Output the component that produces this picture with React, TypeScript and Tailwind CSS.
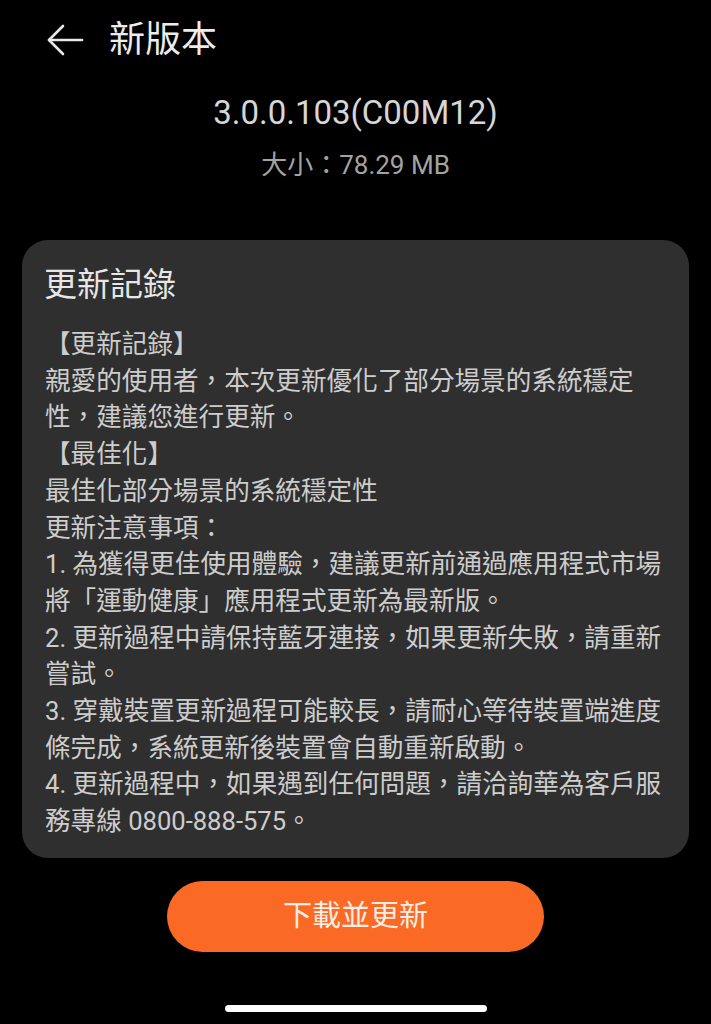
const lines: string[] = [
  "【更新記錄】",
  "親愛的使用者，本次更新優化了部分場景的系統穩定",
  "性，建議您進行更新。",
  "【最佳化】",
  "最佳化部分場景的系統穩定性",
  "更新注意事項：",
  "1. 為獲得更佳使用體驗，建議更新前通過應用程式市場",
  "將「運動健康」應用程式更新為最新版。",
  "2. 更新過程中請保持藍牙連接，如果更新失敗，請重新",
  "嘗試。",
  "3. 穿戴裝置更新過程可能較長，請耐心等待裝置端進度",
  "條完成，系統更新後裝置會自動重新啟動。",
  "4. 更新過程中，如果遇到任何問題，請洽詢華為客戶服",
  "務專線 0800-888-575。",
];

export default function App() {
  return (
    <div
      className="w-[711px] h-[1024px] bg-black flex flex-col overflow-hidden"
      style={{ fontFamily: '"Roboto", "Noto Sans CJK TC", sans-serif' }}
    >
      {/* Top bar */}
      <div className="h-[80px] flex items-center pl-[46px] gap-[25px]">
        <svg width="38" height="34" viewBox="0 0 38 34" fill="none" stroke="#e8e8e8" strokeWidth="2.6" strokeLinecap="round" strokeLinejoin="round">
          <path d="M36 17H3" />
          <path d="M17 3L3 17l14 14" />
        </svg>
        <span className="text-[36px] text-[#ececec] leading-none">新版本</span>
      </div>

      {/* Version info */}
      <div className="flex flex-col items-center">
        <div className="mt-[13px] text-[33px] leading-[40px] text-[#d6d6d6]">3.0.0.103(C00M12)</div>
        <div className="mt-[17px] text-[26px] leading-[30px] text-[#a3a3a3]">大小：78.29 MB</div>
      </div>

      {/* Changelog card */}
      <div className="mt-[60px] mx-[22px] rounded-[26px] bg-[#2f2f2f] pt-[25px] pb-[18px] pl-[22px] pr-[23px]">
        <div className="text-[33px] leading-[40px] text-[#e6e6e6]">更新記錄</div>
        <div className="mt-[21px] pl-px text-[25.6px] leading-[36.7px] text-[#cdcdcd] whitespace-nowrap">
          {lines.map((line, i) => (
            <div key={i}>{line}</div>
          ))}
        </div>
      </div>

      {/* Download button */}
      <div className="flex justify-center mt-[23px]">
        <button className="w-[377px] h-[71px] rounded-full bg-[#fa6a24] text-[29px] text-[#fbeee6]">
          下載並更新
        </button>
      </div>

      {/* Home indicator */}
      <div className="flex justify-center mt-[53px]">
        <div className="w-[262px] h-[7px] rounded-full bg-white" />
      </div>
    </div>
  );
}
